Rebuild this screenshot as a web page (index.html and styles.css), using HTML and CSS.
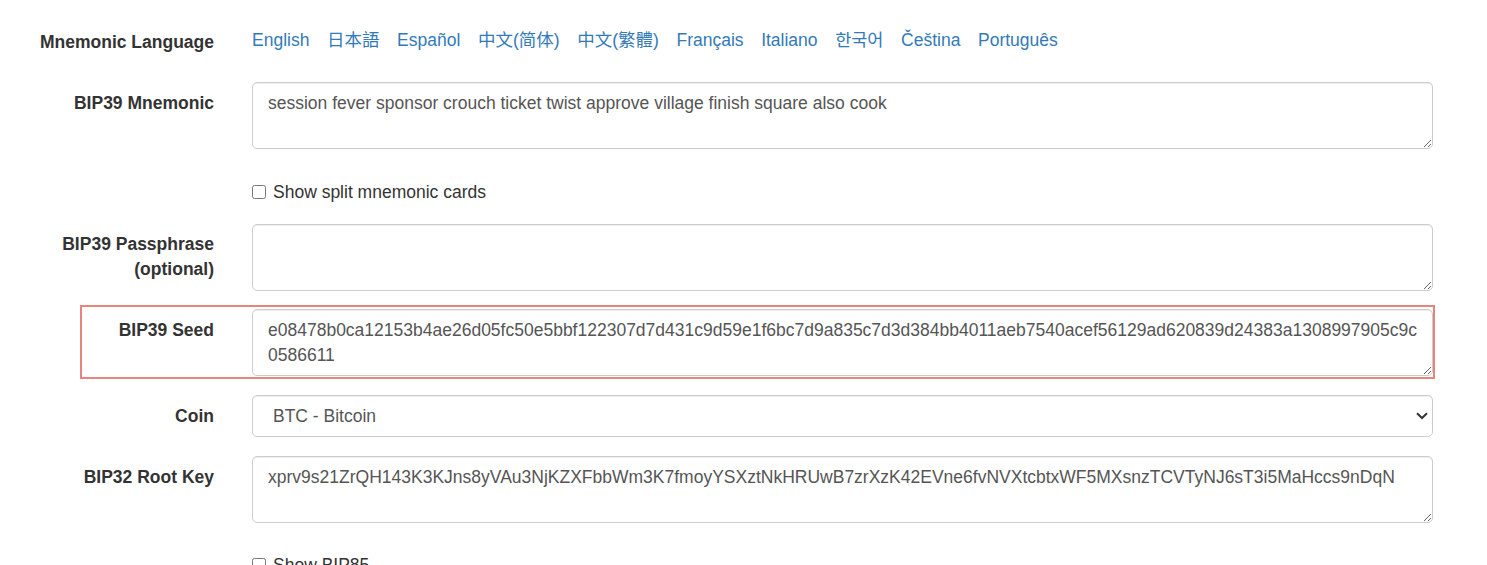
FILE: index.html
```html
<!DOCTYPE html>
<html lang="en">
<head>
<meta charset="utf-8">
<title>BIP39</title>
<link rel="stylesheet" href="styles.css">
</head>
<body>
<form class="form">
  <div class="row row-lang">
    <label class="label">Mnemonic Language</label>
    <div class="langs">
      <a href="#english">English</a>
      <a href="#japanese">日本語</a>
      <a href="#spanish">Español</a>
      <a href="#chinese_simplified">中文(简体)</a>
      <a href="#chinese_traditional">中文(繁體)</a>
      <a href="#french">Français</a>
      <a href="#italian">Italiano</a>
      <a href="#korean">한국어</a>
      <a href="#czech">Čeština</a>
      <a href="#portuguese">Português</a>
    </div>
  </div>

  <div class="row row-mnemonic">
    <label class="label">BIP39 Mnemonic</label>
    <textarea class="field" rows="2">session fever sponsor crouch ticket twist approve village finish square also cook</textarea>
  </div>

  <div class="row row-check1">
    <span></span>
    <label class="check"><input type="checkbox"> Show split mnemonic cards</label>
  </div>

  <div class="row row-pass">
    <label class="label label-pass">BIP39 Passphrase<br>(optional)</label>
    <textarea class="field" rows="2"></textarea>
  </div>

  <div class="row row-seed">
    <div class="highlight"></div>
    <label class="label">BIP39 Seed</label>
    <textarea class="field seed" rows="2">e08478b0ca12153b4ae26d05fc50e5bbf122307d7d431c9d59e1f6bc7d9a835c7d3d384bb4011aeb7540acef56129ad620839d24383a1308997905c9c0586611</textarea>
  </div>

  <div class="row row-coin">
    <label class="label">Coin</label>
    <div class="select-wrap">
      <select class="field select">
        <option>BTC - Bitcoin</option>
      </select>
      <svg class="chevron" width="12" height="8" viewBox="0 0 12 8"><path d="M1 1.2 L6 6 L11 1.2" fill="none" stroke="#333" stroke-width="2"/></svg>
    </div>
  </div>

  <div class="row row-root">
    <label class="label">BIP32 Root Key</label>
    <textarea class="field" rows="2">xprv9s21ZrQH143K3KJns8yVAu3NjKZXFbbWm3K7fmoyYSXztNkHRUwB7zrXzK42EVne6fvNVXtcbtxWF5MXsnzTCVTyNJ6sT3i5MaHccs9nDqN</textarea>
  </div>

  <div class="row row-check2">
    <span></span>
    <label class="check"><input type="checkbox"> Show BIP85</label>
  </div>
</form>
</body>
</html>
```

FILE: styles.css
```css
html, body {
  margin: 0;
  padding: 0;
  background: #fff;
  overflow: hidden;
}

body {
  font-family: "Liberation Sans", Arial, "Noto Sans CJK SC", sans-serif;
  font-size: 17.5px;
  line-height: 25px;
  color: #333;
}

.form {
  padding-top: 20.6px;
  width: 1433px;
}

.row {
  display: grid;
  grid-template-columns: 214px 1181px;
  column-gap: 38px;
  position: relative;
}

.label {
  display: block;
  text-align: right;
  font-weight: bold;
  padding-top: 8.75px;
  color: #333;
}

.row-lang .label {
  padding-top: 9.8px;
}

.label-pass {
  padding-top: 7.75px;
}

.langs {
  display: flex;
  gap: 17.6px;
  padding-top: 7.8px;
  white-space: nowrap;
}

.langs a {
  color: #337ab7;
  text-decoration: none;
  font-family: "Liberation Sans", Arial, "Noto Sans CJK SC", sans-serif;
}

.field {
  display: block;
  box-sizing: border-box;
  width: 1181px;
  margin: 0;
  padding: 8.5px 15px 6.5px;
  font-family: "Liberation Sans", Arial, sans-serif;
  font-size: 17.5px;
  line-height: 25px;
  color: #555;
  background: #fff;
  border: 1px solid #ccc;
  border-radius: 5px;
  box-shadow: inset 0 1px 1px rgba(0, 0, 0, 0.075);
}

textarea.field {
  height: 67.5px;
  resize: vertical;
  overflow: hidden;
}

.seed {
  word-break: break-all;
}

.row-mnemonic { margin-top: 26.6px; }
.row-check1 { margin-top: 31px; }
.row-pass { margin-top: 18.3px; }
.row-seed { margin-top: 17.5px; }
.row-coin { margin-top: 18.5px; }
.row-root { margin-top: 18.5px; }
.row-check2 { margin-top: 30px; }

.check {
  display: flex;
  align-items: center;
  gap: 7px;
  color: #333;
  font-weight: normal;
  white-space: nowrap;
}

.check input {
  width: 14px;
  height: 14px;
  margin: 0;
  position: relative;
  top: -0.5px;
}

.select-wrap {
  position: relative;
}

.select {
  height: 42.5px;
  padding: 0 40px 0 20px;
  appearance: none;
  -webkit-appearance: none;
  line-height: 40px;
}

.chevron {
  position: absolute;
  right: 5px;
  top: 17.5px;
  width: 12px;
  height: 8px;
}

.highlight {
  position: absolute;
  left: 80px;
  top: -4px;
  width: 1351px;
  height: 70px;
  border: 2px solid #e8847e;
  pointer-events: none;
}
```
